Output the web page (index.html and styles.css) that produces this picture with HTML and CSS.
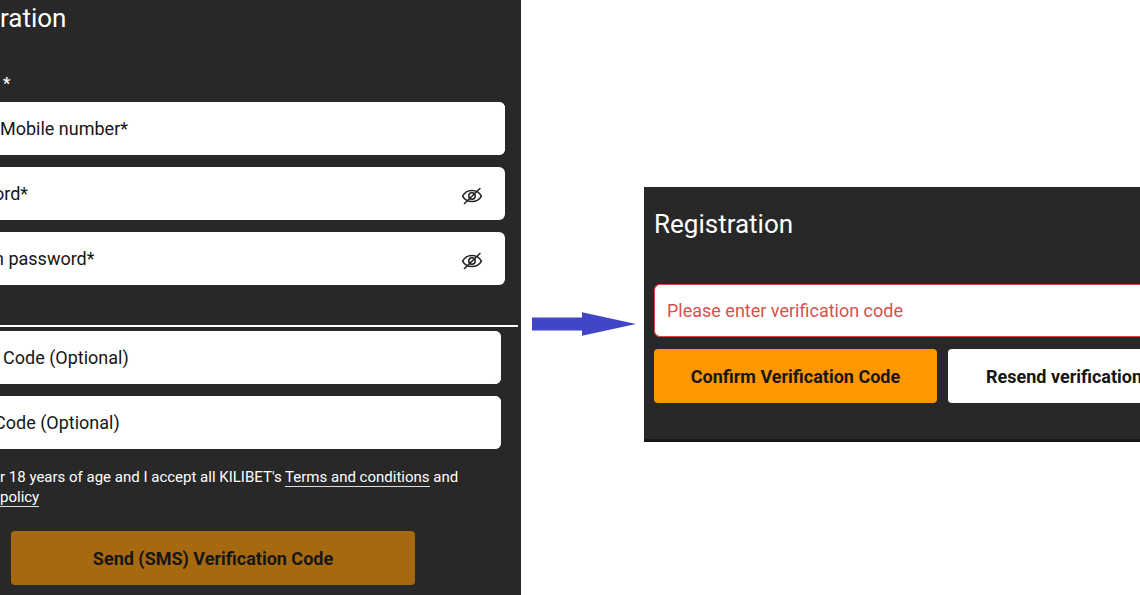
FILE: index.html
```
<!DOCTYPE html>
<html lang="en">
<head>
<meta charset="utf-8">
<meta name="viewport" content="width=device-width, initial-scale=1">
<title>Registration</title>
<link rel="stylesheet" href="styles.css">
</head>
<body>
<svg class="sprite" aria-hidden="true">
  <symbol id="eye-off" viewBox="0 0 22 20">
    <path d="M1.600 10.200C3.500 6.400 6.900 4.400 11 4.400s7.500 2 9.400 5.800c-1.900 3.700-5.300 5.400-9.400 5.400s-7.500-1.700-9.400-5.400z"/>
    <circle cx="11" cy="10" r="3.200"/>
    <path d="M3 18 19.400 2"/>
  </symbol>
</svg>
<main class="flow">
  <form class="panel signup">
    <h1 class="title">ration</h1>
    <p class="required">*</p>
    <div class="fields">
      <div class="field"><input class="input" type="tel" placeholder="Mobile number*" aria-label="Mobile number"></div>
      <div class="field">
        <input class="input cut" type="password" placeholder="ord*" aria-label="Password">
        <button class="reveal" type="button" aria-label="Show password"><svg><use href="#eye-off"/></svg></button>
      </div>
      <div class="field">
        <input class="input cut" type="password" placeholder="n password*" aria-label="Confirm password">
        <button class="reveal" type="button" aria-label="Show password"><svg><use href="#eye-off"/></svg></button>
      </div>
    </div>
    <hr class="divider">
    <div class="fields optional">
      <div class="field"><input class="input inset" type="text" placeholder="Code (Optional)" aria-label="Code (Optional)"></div>
      <div class="field"><input class="input cut" type="text" placeholder="Code (Optional)" aria-label="Second code (Optional)"></div>
    </div>
    <p class="terms">r 18 years of age and I accept all KILIBET's <a href="#terms">Terms and conditions</a> and<br><a href="#policy">policy</a></p>
    <button class="button send" type="button" disabled>Send (SMS) Verification Code</button>
  </form>

  <div class="arrow">
    <svg viewBox="0 0 104 24" aria-hidden="true"><path d="M0 5.500H50V.3L104 12 50 23.700V18.500H0z"/></svg>
  </div>

  <form class="panel verify">
    <h2 class="title">Registration</h2>
    <input class="input error" type="text" placeholder="Please enter verification code" aria-label="Please enter verification code">
    <div class="actions">
      <button class="button confirm" type="button">Confirm Verification Code</button>
      <button class="button resend" type="button">Resend verification</button>
    </div>
  </form>
</main>
</body>
</html>
```
FILE: styles.css
```
* { box-sizing: border-box; }

body {
  margin: 0;
  background: #fff;
  font-family: Roboto, "Liberation Sans", sans-serif;
  font-size: 18px;
  color: #fff;
}

.sprite { display: none; }

.flow {
  display: grid;
  grid-template-columns: 521fr 123fr 496fr;
  min-height: 100vh;
  overflow: hidden;
}

.panel {
  background: #282828;
  overflow: hidden;
  min-width: 0;
}

.title {
  margin: 0;
  font-size: 26px;
  line-height: 32px;
  font-weight: 400;
}

/* Left form, cropped at the window edge */
.signup { padding: 2px 3px 10px 0; }

.required {
  margin: 40px 0 8px;
  padding-left: 3px;
  font-size: 16px;
  font-weight: 700;
  line-height: 20px;
}

.fields {
  display: grid;
  gap: 12px;
  margin: 0 13px 0 -6px;
}

.field {
  display: flex;
  align-items: center;
  height: 53px;
  background: #fff;
  border-radius: 6px;
}

.input {
  flex: 1;
  min-width: 0;
  width: 100%;
  height: 53px;
  padding: 0 6px;
  border: 0;
  border-radius: 6px;
  background: #fff;
  color: #161616;
  font: inherit;
}

.input::placeholder { color: #161616; opacity: 1; }
.input.cut { padding-left: 0; }
.input.inset { padding-left: 9px; }

.reveal {
  display: flex;
  margin-right: 22px;
  padding: 4px 0 0;
  border: 0;
  background: none;
}

.reveal svg {
  width: 22px;
  height: 20px;
  fill: none;
  stroke: #222;
  stroke-width: 1.5;
}

.divider {
  height: 2px;
  margin: 40px 0 4px;
  border: 0;
  background: #fff;
}

.optional { margin-right: 17px; }

.terms {
  margin: 18px 0 24px;
  font-size: 15px;
  line-height: 20px;
  white-space: nowrap;
}

.terms a {
  color: inherit;
  text-decoration: none;
  border-bottom: 1px solid #ddd;
}

.button {
  height: 54px;
  padding: 0;
  border: 0;
  border-radius: 4px;
  font: inherit;
  font-weight: 700;
  color: #161616;
  white-space: nowrap;
}

.send {
  display: block;
  width: 78%;
  margin-left: 11px;
  background: #a6690f;
}

.arrow {
  display: flex;
  align-items: center;
  padding: 53px 8px 0 11px;
}

.arrow svg {
  width: 100%;
  fill: #4145c8;
}

/* Right form */
.verify {
  align-self: center;
  margin-top: 34px;
  padding: 21px 0 36px 10px;
  border-bottom: 3px solid #181818;
}

.error {
  display: block;
  margin: 44px 0 12px;
  padding: 0 12px;
  border: 1px solid #d9463e;
  border-right: 0;
  border-radius: 6px 0 0 6px;
}

.error::placeholder { color: #d6524b; }

.actions {
  display: grid;
  grid-template-columns: 283fr 192fr;
  gap: 11px;
}

.confirm { background: #ff9800; }

.resend {
  padding-left: 38px;
  border-radius: 4px 0 0 4px;
  background: #fff;
  text-align: left;
  overflow: hidden;
}
```
